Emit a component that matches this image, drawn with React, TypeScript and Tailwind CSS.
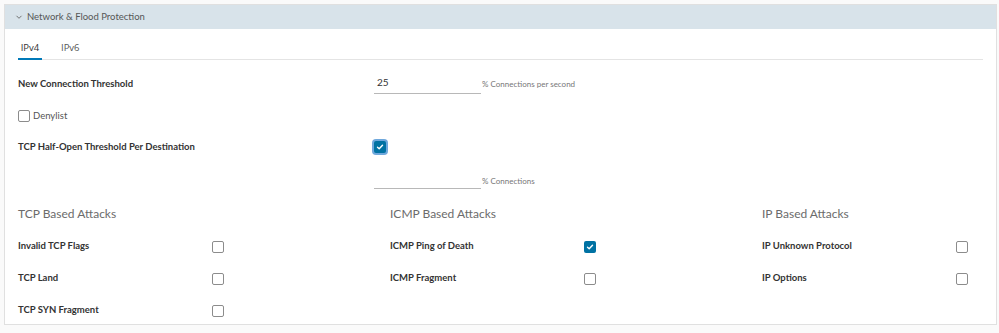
import React from "react";

const font = { fontFamily: "Lato, 'Open Sans', sans-serif" };
const tabFont = { fontFamily: "'Open Sans', Lato, sans-serif" };

function Box({ checked, focus }: { checked?: boolean; focus?: boolean }) {
  if (checked) {
    return (
      <span
        className={
          "flex h-[12px] w-[12px] shrink-0 items-center justify-center rounded-[2px] bg-[#0072a3] " +
          (focus ? "ring-2 ring-[#6fa8dc]" : "")
        }
      >
        <svg width="8" height="8" viewBox="0 0 8 8">
          <path d="M1.5 4.2 L3.2 5.8 L6.5 2.2" stroke="white" strokeWidth="1.4" fill="none" strokeLinecap="round" strokeLinejoin="round" />
        </svg>
      </span>
    );
  }
  return <span className="block h-[12px] w-[12px] shrink-0 rounded-[2px] border border-[#8c8c8c] bg-white" />;
}

function Col({ title, rows }: { title: string; rows: { label: string; checked?: boolean }[] }) {
  return (
    <div className="flex w-[372px] shrink-0 flex-col">
      <div className="h-[14px] text-[12px] leading-[14px] text-[#6b6b6b]">{title}</div>
      <div className="mt-[20px] flex flex-col gap-[20px]">
        {rows.map((r) => (
          <div key={r.label} className="flex h-[12px] items-center">
            <div className="w-[194px] text-[9.5px] font-bold text-[#333]">{r.label}</div>
            <Box checked={r.checked} />
          </div>
        ))}
      </div>
    </div>
  );
}

export default function App() {
  return (
    <div className="h-[333px] w-[999px] bg-[#fafafa] pt-[4px] pl-[4px] pr-[2px]" style={font}>
      <div className="h-[321px] overflow-hidden border border-[#e0e0e0] bg-white">
        <div className="flex h-[24px] items-center bg-[#d8e3ea] pl-[10px] text-[9.5px] text-[#565656]">
          <svg width="8" height="8" viewBox="0 0 8 8" className="mr-[4px]">
            <path d="M1.5 2.8 L4 5.3 L6.5 2.8" stroke="#666" strokeWidth="0.9" fill="none" />
          </svg>
          Network &amp; Flood Protection
        </div>
        <div className="px-[13px]">
          <div className="mt-[11px] flex h-[20px] border-b border-[#e4e4e4] text-[9.5px] text-[#333]" style={tabFont}>
            <div className="relative flex w-[24px] items-start justify-center pt-[1px]">
              IPv4
              <span className="absolute -bottom-[1px] left-0 h-[2px] w-[24px] bg-[#0079b8]" />
            </div>
            <div className="ml-[19px] pt-[1px] text-[#555]">IPv6</div>
          </div>

          <div className="mt-[15px] flex h-[16px] items-start">
            <div className="w-[356px] shrink-0 pt-[2px] text-[9.5px] font-bold text-[#333]">New Connection Threshold</div>
            <div className="w-[107px] shrink-0 border-b border-[#b8b8b8] pb-[3px] pl-[3px] text-[10px] text-[#333]">25</div>
            <div className="pt-[3px] pl-[1px] text-[8px] text-[#777]">% Connections per second</div>
          </div>

          <div className="mt-[18px] flex items-center gap-[3px]">
            <Box />
            <span className="text-[9.5px] text-[#555]">Denylist</span>
          </div>

          <div className="mt-[17px] flex items-center">
            <div className="w-[356px] shrink-0 text-[9.5px] font-bold text-[#333]">TCP Half-Open Threshold Per Destination</div>
            <Box checked focus />
          </div>

          <div className="mt-[18px] flex h-[16px] items-start">
            <div className="w-[356px] shrink-0" />
            <div className="h-[16px] w-[107px] shrink-0 border-b border-[#b8b8b8]" />
            <div className="pt-[2px] pl-[1px] text-[8px] text-[#777]">% Connections</div>
          </div>

          <div className="mt-[18px] flex">
            <Col title="TCP Based Attacks" rows={[{ label: "Invalid TCP Flags" }, { label: "TCP Land" }, { label: "TCP SYN Fragment" }]} />
            <Col title="ICMP Based Attacks" rows={[{ label: "ICMP Ping of Death", checked: true }, { label: "ICMP Fragment" }]} />
            <Col title="IP Based Attacks" rows={[{ label: "IP Unknown Protocol" }, { label: "IP Options" }]} />
          </div>
        </div>
      </div>
    </div>
  );
}
